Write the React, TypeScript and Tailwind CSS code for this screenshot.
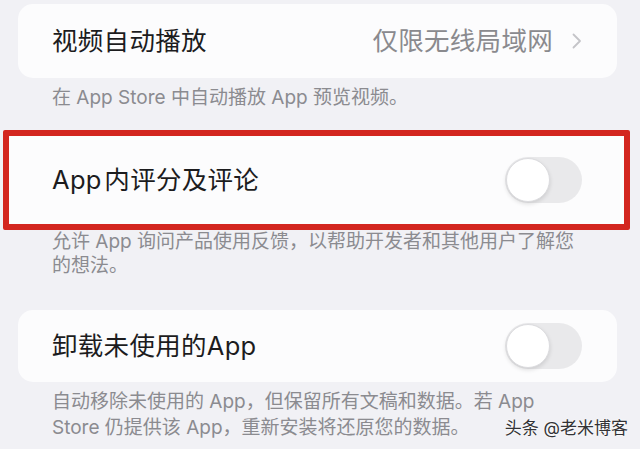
const font = "font-['Inter','Noto_Sans_CJK_SC',sans-serif]";

function Toggle() {
  return (
    <div className="flex h-[46px] w-[77px] items-center rounded-full bg-[#e9e9eb] p-[1px]">
      <div className="h-[44px] w-[44px] rounded-full border border-[#dcdcdf] bg-white shadow-[0_2px_4px_rgba(0,0,0,0.12)]" />
    </div>
  );
}

function Caption({ lines, leading = "leading-[24px]" }: { lines: string[]; leading?: string }) {
  return (
    <div className={`px-[52px] text-[19px] text-[#8b8b90] ${leading}`}>
      {lines.map((l) => (
        <div key={l} className="whitespace-nowrap">
          {l}
        </div>
      ))}
    </div>
  );
}

export default function App() {
  return (
    <div className={`relative h-[449px] w-[640px] overflow-hidden bg-[#f1f1f5] pt-[4px] ${font}`}>
      {/* 视频自动播放 */}
      <div className="ml-[18px] mr-[23px] flex h-[74px] items-center justify-between rounded-[15px] bg-[#fcfcfd] pl-[34px] pr-[35px]">
        <span className="text-[25.5px] tracking-[0.3px] text-[#1c1c1e]">视频自动播放</span>
        <div className="flex items-center gap-[19px]">
          <span className="text-[25.5px] tracking-[0.3px] text-[#8a8a8e]">仅限无线局域网</span>
          <svg width="10" height="16" viewBox="0 0 10 16" fill="none">
            <polyline points="1.5,1.5 8,8 1.5,14.5" stroke="#c4c4c8" strokeWidth="1.8" strokeLinecap="round" strokeLinejoin="round" />
          </svg>
        </div>
      </div>
      <div className="mt-[8px]">
        <Caption lines={["在 App Store 中自动播放 App 预览视频。"]} />
      </div>

      {/* 高亮的行 */}
      <div className="mx-[3px] mt-[20px] flex h-[100px] w-[627px] items-center justify-between rounded-[2px] border-[6px] border-[#d3261f] bg-[#fcfcfd] pl-[43px] pr-[42px]">
        <span className="text-[25.5px] tracking-[0.3px] text-[#1c1c1e]">App&#8202;内评分及评论</span>
        <Toggle />
      </div>
      <Caption lines={["允许 App 询问产品使用反馈，以帮助开发者和其他用户了解您", "的想法。"]} />

      {/* 卸载未使用的 App */}
      <div className="ml-[18px] mr-[23px] mt-[32px] flex h-[72px] items-center justify-between rounded-[15px] bg-[#fcfcfd] pl-[34px] pr-[35px]">
        <span className="text-[25.5px] tracking-[0.3px] text-[#1c1c1e]">卸载未使用的App</span>
        <Toggle />
      </div>
      <div className="mt-[7px]">
        <Caption
          leading="leading-[26px]"
          lines={["自动移除未使用的 App，但保留所有文稿和数据。若 App", "Store 仍提供该 App，重新安装将还原您的数据。"]}
        />
      </div>

      <div className="absolute right-[12px] top-[416px] text-[17px] leading-[24px] text-[#333336] [text-shadow:0_0_2px_#fff,0_0_2px_#fff]">
        头条 @老米博客
      </div>
    </div>
  );
}
